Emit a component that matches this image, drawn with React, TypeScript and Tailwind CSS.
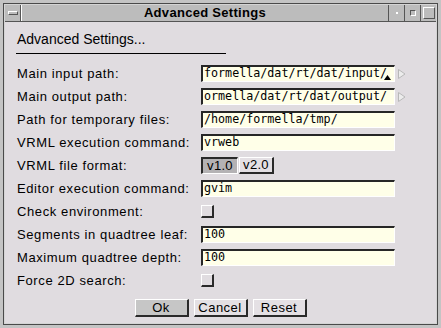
const rows: { label: string; kind: "text" | "check" | "version"; value?: string; arrow?: boolean; cursor?: boolean }[] = [
  { label: "Main input path:", kind: "text", value: "formella/dat/rt/dat/input/", arrow: true, cursor: true },
  { label: "Main output path:", kind: "text", value: "ormella/dat/rt/dat/output/", arrow: true },
  { label: "Path for temporary files:", kind: "text", value: "/home/formella/tmp/" },
  { label: "VRML execution command:", kind: "text", value: "vrweb" },
  { label: "VRML file format:", kind: "version" },
  { label: "Editor execution command:", kind: "text", value: "gvim" },
  { label: "Check environment:", kind: "check" },
  { label: "Segments in quadtree leaf:", kind: "text", value: "100" },
  { label: "Maximum quadtree depth:", kind: "text", value: "100" },
  { label: "Force 2D search:", kind: "check" },
];

function Arrow() {
  return (
    <svg width="8" height="10" viewBox="0 0 8 10" className="ml-[3px]">
      <path d="M0.5 0.5 L7 5 L0.5 9.5 Z" fill="#ececec" stroke="#b8b8b8" strokeWidth="1" />
    </svg>
  );
}

function TextField({ value, cursor }: { value: string; cursor?: boolean }) {
  return (
    <div className="relative w-[194px] h-[17px] bg-[#ffffe8] border-t-2 border-l-2 border-t-[#262626] border-l-[#262626] border-b border-r border-b-white border-r-white flex items-center pl-[1px] overflow-hidden font-['DejaVu_Sans_Mono',monospace] text-[11.7px] tracking-normal leading-none text-black whitespace-pre">
      {value}
      {cursor && (
        <svg width="7" height="5" viewBox="0 0 7 5" className="absolute left-[181px] bottom-[1px]">
          <path d="M0 5 L3.5 0 L7 5 Z" fill="#000" />
        </svg>
      )}
    </div>
  );
}

function Check() {
  return (
    <div className="w-[13px] h-[13px] bg-[#e0dce0] border-t border-l border-t-white border-l-white border-b-2 border-r-2 border-b-[#2a2a2a] border-r-[#2a2a2a]" />
  );
}

function Version() {
  return (
    <div className="flex h-[17px] font-['Liberation_Sans',sans-serif] text-[13px] tracking-[0.3px]">
      <div className="w-[37px] bg-[#b4b2b4] border-t-2 border-l-2 border-t-[#2a2a2a] border-l-[#2a2a2a] border-b border-r border-b-white border-r-white flex items-center justify-center">
        v1.0
      </div>
      <div className="w-[35px] ml-[1px] bg-[#e4e0e4] border-t border-l border-t-white border-l-white border-b-2 border-r-2 border-b-[#2a2a2a] border-r-[#2a2a2a] flex items-center justify-center">
        v2.0
      </div>
    </div>
  );
}

function Button({ label, primary }: { label: string; primary?: boolean }) {
  return (
    <div
      className={
        "w-[54px] h-[18px] flex items-center justify-center border-t border-l border-t-white border-l-white border-b-2 border-r-2 border-b-[#2a2a2a] border-r-[#2a2a2a] " +
        (primary ? "bg-[#c6c6c6]" : "bg-[#e4e0e4]")
      }
    >
      {label}
    </div>
  );
}

export default function App() {
  return (
    <div className="w-[441px] h-[328px] bg-[#c4c4c4] p-[3px] text-black">
      <div className="h-full border border-[#4a4a4a] flex flex-col bg-[#d4d4d4] p-[1px]">
        <div className="h-[17px] flex border-b border-[#555] bg-[#bcbcbc]">
          <div className="w-[16px] border-r border-[#555] flex items-center justify-center">
            <div className="w-[10px] h-[4px] border border-t-white border-l-white border-b-[#555] border-r-[#555]" />
          </div>
          <div className="flex-1 flex items-center justify-center font-['Liberation_Sans',sans-serif] text-[13px] font-bold tracking-[0.3px] border-l border-white">
            Advanced Settings
          </div>
          <div className="w-[16px] border-l border-[#555] flex items-center justify-center">
            <div className="w-[2px] h-[2px] bg-white" />
          </div>
          <div className="w-[16px] border-l border-[#555] flex items-center justify-center">
            <div className="w-[6px] h-[6px] border border-t-[#555] border-l-[#555] border-b-white border-r-white" />
          </div>
          <div className="w-[16px] border-l border-[#555] flex items-center justify-center">
            <div className="w-[12px] h-[12px] border border-t-white border-l-white border-b-[#555] border-r-[#555]" />
          </div>
        </div>
        <div className="flex-1 bg-[#e0dce0] pl-[12px] pt-[9px] font-['Liberation_Sans',sans-serif] text-[13px] tracking-[0.6px]">
          <div className="text-[14px] leading-[16px] tracking-[0px]">Advanced Settings...</div>
          <div className="mt-[6px] w-[210px] h-px bg-black -ml-[1px]" />
          <div className="mt-[8px] flex flex-col">
            {rows.map((r) => (
              <div key={r.label} className="h-[23px] flex items-center">
                <div className="w-[184px]">{r.label}</div>
                {r.kind === "text" && (
                  <>
                    <TextField value={r.value ?? ""} cursor={r.cursor} />
                    {r.arrow && <Arrow />}
                  </>
                )}
                {r.kind === "check" && <Check />}
                {r.kind === "version" && <Version />}
              </div>
            ))}
          </div>
          <div className="mt-[7px] -ml-[12px] flex justify-center gap-[5px] tracking-[0.5px]">
            <Button label="Ok" primary />
            <Button label="Cancel" />
            <Button label="Reset" />
          </div>
        </div>
      </div>
    </div>
  );
}
